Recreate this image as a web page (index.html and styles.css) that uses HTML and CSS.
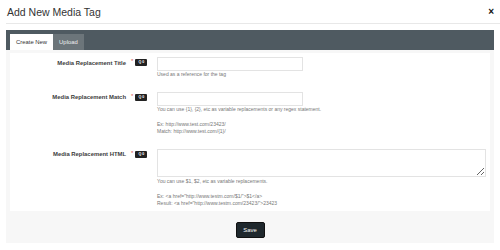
FILE: index.html
```html
<!DOCTYPE html>
<html lang="en">
<head>
    <meta charset="UTF-8">
    <title>Add New Media Tag</title>
    <link rel="stylesheet" href="styles.css">
</head>
<body>
    <div class="modal-header">
        <h1>Add New Media Tag</h1>
        <span class="close">&times;</span>
    </div>

    <div class="modal-body">
        <div class="tab-bar">
            <div class="tab active">Create New</div>
            <div class="tab">Upload</div>
        </div>

        <div class="tab-panel">
            <form class="form-inner">
                <div class="form-row">
                    <label>Media Replacement Title</label>
                    <div class="marker"><span class="req">*</span><span class="badge">Q 0</span></div>
                    <div class="field">
                        <input type="text" class="input">
                        <div class="help">Used as a reference for the tag</div>
                    </div>
                </div>

                <div class="form-row">
                    <label>Media Replacement Match</label>
                    <div class="marker"><span class="req">*</span><span class="badge">Q 0</span></div>
                    <div class="field">
                        <input type="text" class="input">
                        <div class="help">
                            You can use {1}, {2}, etc as variable replacements or any regex statement.<br><br>
                            Ex: http://www.test.com/23423/<br>
                            Match: http://www.test.com/{1}/
                        </div>
                    </div>
                </div>

                <div class="form-row">
                    <label>Media Replacement HTML</label>
                    <div class="marker"><span class="req">*</span><span class="badge">Q 0</span></div>
                    <div class="field">
                        <textarea class="textarea"></textarea>
                        <div class="help help-area">
                            You can use $1, $2, etc as variable replacements.<br><br>
                            Ex: &lt;a href="http://www.testm.com/$1/"&gt;$1&lt;/a&gt;<br>
                            Result: &lt;a href="http://www.testm.com/23423/"&gt;23423
                        </div>
                    </div>
                </div>
            </form>

            <div class="form-footer">
                <button type="button" class="save-btn">Save</button>
            </div>
        </div>
    </div>
</body>
</html>
```

FILE: styles.css
```css
* {
    margin: 0;
    padding: 0;
    box-sizing: border-box;
}

body {
    font-family: 'Liberation Sans', Arial, sans-serif;
    color: #333;
    background: #fff;
}

.modal-header {
    display: flex;
    justify-content: space-between;
    align-items: center;
    margin-left: 6px;
    padding: 5px 6px 4px 1px;
    border-bottom: 1px solid #e8e8e8;
}

h1 {
    font-size: 10.5px;
    font-weight: normal;
    line-height: 14px;
    color: #333;
}

.close {
    font-size: 10px;
    font-weight: bold;
    line-height: 14px;
    color: #111;
}

.modal-body {
    margin: 6px 6px 0 6px;
}

.tab-bar {
    display: flex;
    align-items: flex-end;
    height: 20px;
    padding-left: 4px;
    background: #4f5a61;
}

.tab {
    height: 16px;
    padding: 0 6px;
    font-size: 5.9px;
    line-height: 16px;
    color: #eee;
    background: #6c757a;
}

.tab.active {
    color: #333;
    background: #fff;
}

.tab-panel {
    padding: 3px 4px 0 4px;
    background: #f7f7f7;
}

.form-inner {
    padding: 4px 0 3px 0;
    background: #fff;
}

.form-row {
    display: grid;
    grid-template-columns: 116px 31px 1fr;
    margin-bottom: 13px;
}

.form-row:last-child {
    margin-bottom: 0;
}

.form-row label {
    padding-top: 2.5px;
    text-align: right;
    font-size: 5.9px;
    font-weight: bold;
    line-height: 7px;
    color: #3c3c3c;
}

.marker {
    display: flex;
    align-items: flex-start;
    padding-left: 5px;
}

.req {
    margin-top: 2px;
    font-size: 6px;
    line-height: 5px;
    color: #d9534f;
}

.badge {
    margin: 2px 0 0 2px;
    width: 12px;
    height: 7px;
    font-size: 3.6px;
    font-weight: bold;
    line-height: 7px;
    text-align: center;
    color: #fff;
    background: #222;
    border-radius: 1px;
}

.field {
    padding-right: 4px;
}

.input {
    display: block;
    width: 146px;
    height: 14px;
    border: 1px solid #e3e3e3;
    background: #fff;
}

.textarea {
    display: block;
    width: 329px;
    height: 28px;
    border: 1px solid #e3e3e3;
    resize: vertical;
    font-size: 5px;
}

.help {
    font-size: 5px;
    line-height: 7.5px;
    color: #777;
}

.help-area {
    margin-top: 1px;
}

.form-footer {
    display: flex;
    justify-content: center;
    padding: 11px 0 5px 0;
}

.save-btn {
    width: 29px;
    height: 16px;
    font-family: 'Liberation Sans', Arial, sans-serif;
    font-size: 5.9px;
    color: #fff;
    background: #1f282d;
    border: 1px solid #111;
    border-radius: 2px;
}
```
